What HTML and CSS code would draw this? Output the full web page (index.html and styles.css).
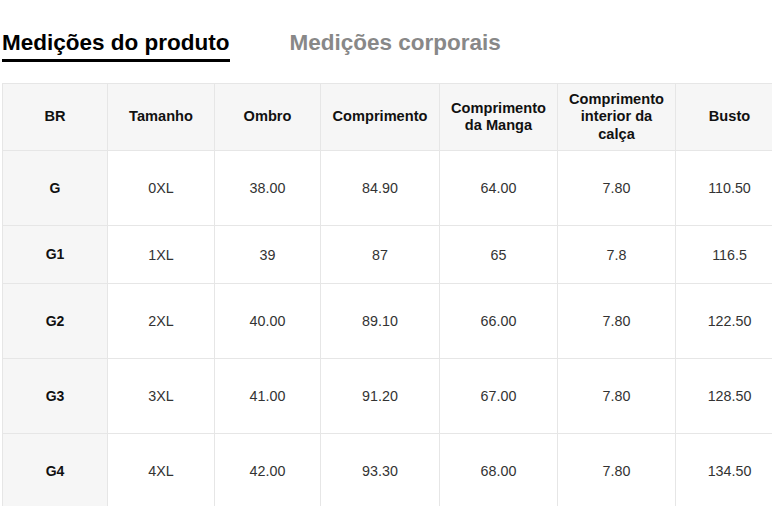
FILE: index.html
```html
<!DOCTYPE html>
<html lang="pt">
<head>
<meta charset="utf-8">
<title>Medições</title>
<link rel="stylesheet" href="styles.css">
</head>
<body>
<div class="page">
  <nav class="tabs">
    <span class="tab tab-active">Medições do produto</span>
    <span class="tab">Medições corporais</span>
  </nav>
  <div class="table-wrap">
    <table class="size-table">
      <colgroup>
        <col class="c1"><col class="c2"><col class="c3"><col class="c4"><col class="c5"><col class="c6"><col class="c7">
      </colgroup>
      <thead>
        <tr class="head-row">
          <th>BR</th>
          <th>Tamanho</th>
          <th>Ombro</th>
          <th>Comprimento</th>
          <th>Comprimento da Manga</th>
          <th>Comprimento interior da calça</th>
          <th>Busto</th>
        </tr>
      </thead>
      <tbody>
        <tr class="row-tall">
          <th>G</th><td>0XL</td><td>38.00</td><td>84.90</td><td>64.00</td><td>7.80</td><td>110.50</td>
        </tr>
        <tr class="row-short">
          <th>G1</th><td>1XL</td><td>39</td><td>87</td><td>65</td><td>7.8</td><td>116.5</td>
        </tr>
        <tr class="row-tall">
          <th>G2</th><td>2XL</td><td>40.00</td><td>89.10</td><td>66.00</td><td>7.80</td><td>122.50</td>
        </tr>
        <tr class="row-tall">
          <th>G3</th><td>3XL</td><td>41.00</td><td>91.20</td><td>67.00</td><td>7.80</td><td>128.50</td>
        </tr>
        <tr class="row-tall">
          <th>G4</th><td>4XL</td><td>42.00</td><td>93.30</td><td>68.00</td><td>7.80</td><td>134.50</td>
        </tr>
      </tbody>
    </table>
  </div>
</div>
</body>
</html>
```
FILE: styles.css
```css
html, body {
  margin: 0;
  padding: 0;
  overflow: hidden;
  background: #fff;
}
body {
  font-family: "Liberation Sans", Arial, sans-serif;
  color: #333;
}
.page {
  padding: 30px 0 0 2px;
}
.tabs {
  display: flex;
  gap: 60px;
  align-items: flex-start;
}
.tab {
  font-size: 22.5px;
  font-weight: bold;
  line-height: 25px;
  color: #888;
  padding-bottom: 4px;
  border-bottom: 3px solid transparent;
}
.tab-active {
  color: #000;
  border-bottom-color: #000;
}
.table-wrap {
  margin-top: 21px;
  overflow: hidden;
  width: 100%;
}
.size-table {
  border-collapse: collapse;
  table-layout: fixed;
  width: 781px;
}
.c1 { width: 105px; }
.c2 { width: 107px; }
.c3 { width: 106px; }
.c4 { width: 119px; }
.c5 { width: 118px; }
.c6 { width: 118px; }
.c7 { width: 108px; }
.size-table th,
.size-table td {
  border: 1px solid #e6e6e6;
  text-align: center;
  vertical-align: middle;
  padding: 0 8px;
}
.size-table td {
  font-size: 14.3px;
  color: #333;
}
.size-table th {
  font-size: 14.6px;
  line-height: 1.2;
  font-weight: bold;
  color: #111;
  background: #f6f6f6;
}
.size-table tbody th {
  font-size: 14px;
}
.head-row th { height: 66px; }
.row-tall th, .row-tall td { height: 74px; }
.row-short th, .row-short td { height: 57px; }
```
